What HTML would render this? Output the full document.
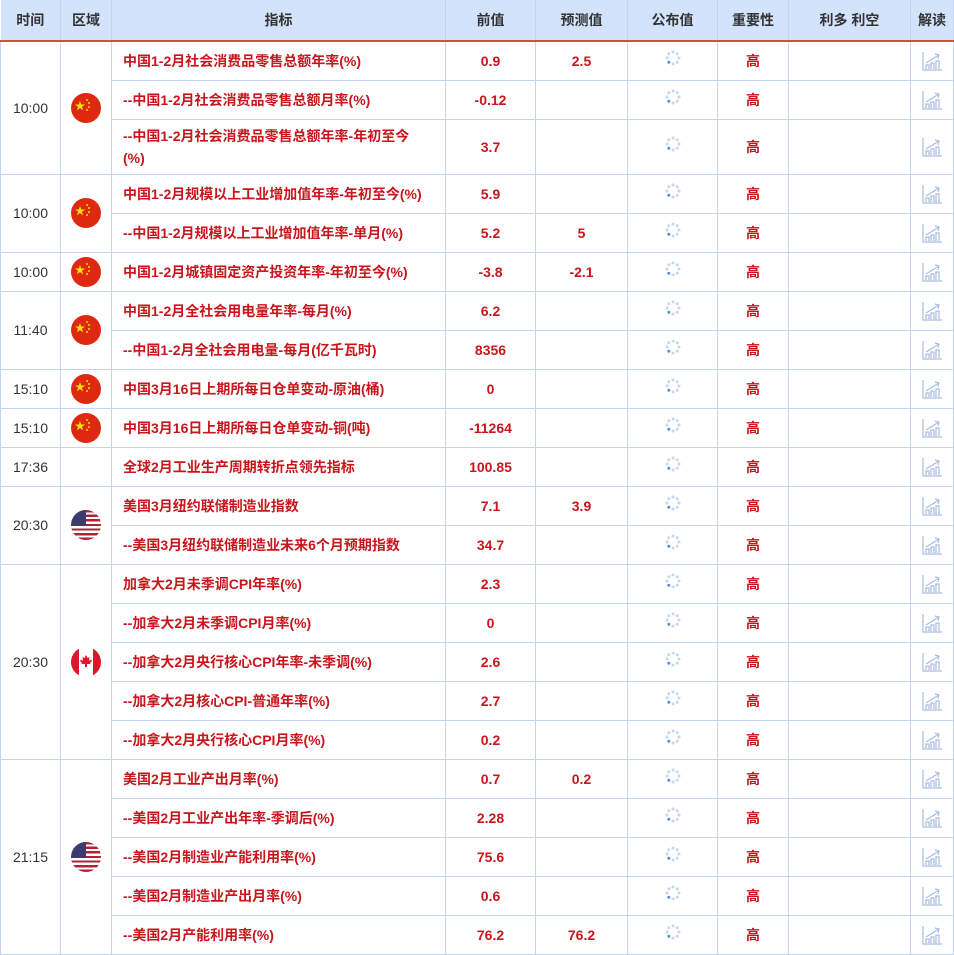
<!DOCTYPE html>
<html><head><meta charset="utf-8">
<style>
*{margin:0;padding:0;box-sizing:border-box}
body{width:954px;height:954px;overflow:hidden;background:#fff;font-family:"Liberation Sans","Noto Sans CJK SC",sans-serif}
table{border-collapse:collapse;table-layout:fixed;width:953px}
th{height:41px;background:#d3e3fc;color:#333;font-size:14px;font-weight:bold;border-right:1px solid #c3d5f2;border-bottom:2px solid #c9503f;text-align:center}
td{border:1px solid #c3d5f2;height:39px;text-align:center;font-size:14px;color:#c8161d;font-weight:bold;padding:0}
td.t{color:#333;font-weight:normal}
td.n{text-align:left;padding-left:11px;line-height:22px}
td.h{height:55px}
.s{position:relative;top:-1px}
.c{position:relative;top:2px}
.fl{width:30px;height:30px;border-radius:50%;display:inline-block;vertical-align:middle;overflow:hidden}
.cn{background:#de2910;position:relative}
.us{background:repeating-linear-gradient(#b22234 0 2.3px,#fff 2.3px 4.6px);position:relative}
.us:before{content:"";position:absolute;left:0;top:0;width:15px;height:16px;background:#3c3b6e}
.ca{background:linear-gradient(90deg,#e0142a 0 8px,#fff 8px 22px,#e0142a 22px);position:relative}
</style></head><body>
<svg width="0" height="0" style="position:absolute">
<defs>
<g id="sp"><g fill="#c3d7f2"><circle cx="0" cy="-6" r="1.5"/><circle cx="4.2" cy="-4.2" r="1.5"/><circle cx="6" cy="0" r="1.5"/><circle cx="4.2" cy="4.2" r="1.5"/><circle cx="0" cy="6" r="1.5"/><circle cx="-6" cy="0" r="1.5"/><circle cx="-4.2" cy="-4.2" r="1.5"/></g><circle cx="-4.2" cy="4.2" r="1.5" fill="#5b8bd0"/></g>
<g id="ch" fill="none" stroke="#a9bce2" stroke-width="1.2"><path d="M1 1V19H20"/><path d="M4 18v-4h3v4M9 18v-6h3v6M14 18v-8h3v8"/><path d="M4 12L17 4"/><path d="M13 3l4 1-1 4" /></g>
</defs></svg>
<table>
<colgroup><col style="width:60px"><col style="width:51px"><col style="width:334px"><col style="width:90px"><col style="width:92px"><col style="width:90px"><col style="width:71px"><col style="width:122px"><col style="width:43px"></colgroup>
<tr><th>时间</th><th>区域</th><th>指标</th><th>前值</th><th>预测值</th><th>公布值</th><th>重要性</th><th>利多 利空</th><th>解读</th></tr>
<tbody id="b"></tbody>
</table>
<script>
var sp='<svg class="s" width="16" height="16" viewBox="-8 -8 16 16"><use href="#sp"/></svg>';
var ch='<svg class="c" width="21" height="21" viewBox="0 0 21 21"><use href="#ch"/></svg>';
var fl={cn:'<span class="fl cn"><svg width="30" height="30"><polygon points="9,8 10.2,11.5 14,11.5 11,13.7 12.1,17.3 9,15.1 5.9,17.3 7,13.7 4,11.5 7.8,11.5" fill="#ffde00"/><circle cx="16" cy="7" r="1" fill="#ffde00"/><circle cx="18" cy="10" r="1" fill="#ffde00"/><circle cx="18" cy="14" r="1" fill="#ffde00"/><circle cx="16" cy="17" r="1" fill="#ffde00"/></svg></span>',
us:'<span class="fl us"></span>',
ca:'<span class="fl ca"><svg width="30" height="30"><path d="M15 8l1.5 3 2-1-0.5 4 2-1.5 1 1.5-2 2 0.5 1H16v3h-2v-3h-3.5l0.5-1-2-2 1-1.5 2 1.5-0.5-4 2 1z" fill="#e0142a"/></svg></span>',
'':''};
var g=[
['10:00','cn',[['中国1-2月社会消费品零售总额年率(%)','0.9','2.5'],['--中国1-2月社会消费品零售总额月率(%)','-0.12',''],['--中国1-2月社会消费品零售总额年率-年初至今<br>(%)','3.7','',1]]],
['10:00','cn',[['中国1-2月规模以上工业增加值年率-年初至今(%)','5.9',''],['--中国1-2月规模以上工业增加值年率-单月(%)','5.2','5']]],
['10:00','cn',[['中国1-2月城镇固定资产投资年率-年初至今(%)','-3.8','-2.1']]],
['11:40','cn',[['中国1-2月全社会用电量年率-每月(%)','6.2',''],['--中国1-2月全社会用电量-每月(亿千瓦时)','8356','']]],
['15:10','cn',[['中国3月16日上期所每日仓单变动-原油(桶)','0','']]],
['15:10','cn',[['中国3月16日上期所每日仓单变动-铜(吨)','-11264','']]],
['17:36','',[['全球2月工业生产周期转折点领先指标','100.85','']]],
['20:30','us',[['美国3月纽约联储制造业指数','7.1','3.9'],['--美国3月纽约联储制造业未来6个月预期指数','34.7','']]],
['20:30','ca',[['加拿大2月未季调CPI年率(%)','2.3',''],['--加拿大2月未季调CPI月率(%)','0',''],['--加拿大2月央行核心CPI年率-未季调(%)','2.6',''],['--加拿大2月核心CPI-普通年率(%)','2.7',''],['--加拿大2月央行核心CPI月率(%)','0.2','']]],
['21:15','us',[['美国2月工业产出月率(%)','0.7','0.2'],['--美国2月工业产出年率-季调后(%)','2.28',''],['--美国2月制造业产能利用率(%)','75.6',''],['--美国2月制造业产出月率(%)','0.6',''],['--美国2月产能利用率(%)','76.2','76.2']]]
];
var h='';
g.forEach(function(x){x[2].forEach(function(r,i){
var c=r[3]?' h':'';
h+='<tr>';
if(i==0)h+='<td class="t" rowspan="'+x[2].length+'">'+x[0]+'</td><td rowspan="'+x[2].length+'">'+fl[x[1]]+'</td>';
h+='<td class="n'+c+'">'+r[0]+'</td><td class="'+c+'">'+r[1]+'</td><td>'+r[2]+'</td><td>'+sp+'</td><td>高</td><td></td><td>'+ch+'</td></tr>';
});});
document.getElementById('b').innerHTML=h;
</script>
</body></html>
